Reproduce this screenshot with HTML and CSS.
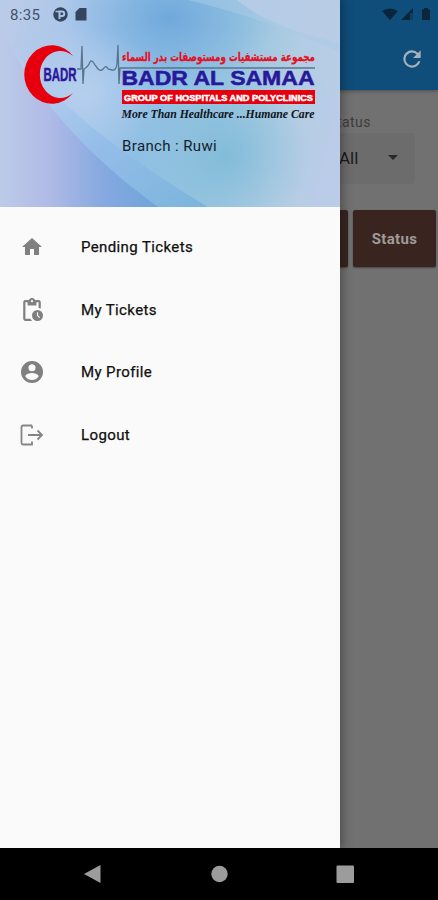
FILE: index.html
```html
<!DOCTYPE html>
<html lang="en">
<head>
<meta charset="utf-8">
<title>Badr Al Samaa</title>
<link rel="stylesheet" href="styles.css">
</head>
<body>
<div class="phone">
  <div class="screen">
    <header class="appbar">
      <div class="sysicons">
        <svg width="52" height="16" viewBox="0 0 52 16"><path d="M1 4Q9-1 17 4L9 13Z"/><path d="M20 13L32 1V6H29V13Z"/><path d="M29 6H32V13H29Z" opacity=".35"/><path d="M41 2.500h2V1h4v1.500h2V13h-8Z"/></svg>
      </div>
      <svg class="refresh" width="26" height="26" viewBox="0 0 24 24"><path d="M17.65 6.35A7.96 7.96 0 0 0 12 4a8 8 0 1 0 7.73 10h-2.08A6 6 0 1 1 12 6c1.66 0 3.14.69 4.22 1.78L13 11h7V4z"/></svg>
    </header>
    <main class="content">
      <div class="field">
        <div class="label">Status</div>
        <div class="select"><span>All</span><i class="caret"></i></div>
      </div>
      <div class="thead"><div class="cell"></div><div class="cell last">Status</div></div>
    </main>
    <aside class="drawer">
      <div class="banner">
        <svg class="art" width="340" height="207" viewBox="0 0 340 207">
          <defs>
            <linearGradient id="base" x1="0" y1=".35" x2="1" y2=".5">
              <stop offset="0" stop-color="#b9cbe8"/><stop offset=".2" stop-color="#a7c5ea"/><stop offset=".45" stop-color="#8fbfe4"/><stop offset=".66" stop-color="#98c5e0"/><stop offset=".85" stop-color="#b2cde3"/><stop offset="1" stop-color="#bacce7"/>
            </linearGradient>
            <linearGradient id="low" x1="0" y1="0" x2="1" y2="0">
              <stop offset="0" stop-color="#bccbe8"/><stop offset=".3" stop-color="#b1bbe6"/><stop offset=".65" stop-color="#86a9e0"/><stop offset="1" stop-color="#6da5da"/>
            </linearGradient>
            <linearGradient id="band" gradientUnits="userSpaceOnUse" x1="20" y1="30" x2="200" y2="207">
              <stop offset="0" stop-color="#c0d5ef" stop-opacity=".2"/><stop offset=".55" stop-color="#94bde9"/><stop offset="1" stop-color="#7bb5dc"/>
            </linearGradient>
            <radialGradient id="blue"><stop offset="0" stop-color="#6fa9db"/><stop offset="1" stop-color="#7db1e0" stop-opacity="0"/></radialGradient>
            <radialGradient id="teal"><stop offset="0" stop-color="#82bcd9"/><stop offset="1" stop-color="#8abfdc" stop-opacity="0"/></radialGradient>
            <radialGradient id="pale"><stop offset="0" stop-color="#bdd4f0" stop-opacity=".7"/><stop offset="1" stop-color="#bdd2ef" stop-opacity="0"/></radialGradient>
          </defs>
          <rect width="340" height="207" fill="url(#base)"/>
          <ellipse cx="170" cy="18" rx="105" ry="75" fill="url(#blue)"/>
          <ellipse cx="225" cy="155" rx="85" ry="85" fill="url(#teal)"/>
          <ellipse cx="85" cy="95" rx="75" ry="70" fill="url(#pale)"/>
          <path d="M0 35Q70 125 208 207H0Z" fill="url(#band)"/>
          <path d="M0 25Q45 125 158 207H0Z" fill="url(#low)"/>
          <path d="M188 0Q270 20 340 52V0Z" fill="#a9cbe5" opacity=".5"/>
          <path d="M237 0Q270 28 340 43V0Z" fill="#bacce6" opacity=".8"/>
        </svg>
        <div class="clockrow">
          <span>8:35</span>
          <svg width="34" height="15" viewBox="0 0 34 15"><circle cx="7.5" cy="7.5" r="7.2" fill="#34465e"/><path d="M6.500 12V4.500H9A2.200 2.200 0 0 1 9 9H6.500" fill="none" stroke="#a9c5e6" stroke-width="2"/><path d="M2.500 4.500H6" fill="none" stroke="#a9c5e6" stroke-width="1.500"/><path d="M30 1H37V13.500H26V5Z" transform="translate(-3.500)" fill="#34465e"/></svg>
        </div>
        <svg class="logo" width="300" height="84" viewBox="20 40 300 84">
          <path d="M73 56A27.500 29.200 0 1 0 73 93A20.500 23.500 0 1 1 73 56Z" fill="#e6000d"/>
          <text x="43.5" y="81" class="badr" textLength="33" lengthAdjust="spacingAndGlyphs">BADR</text>
          <path d="M77 69H81L82 46L83 84L84 69Q88 67 90 62Q92 59 95 65L98 69Q101 72 104 68Q106 65 108 69L112 70Q116 71 117 64L118 45L119 84L120 68H315" fill="none" stroke="#58758f" stroke-width="1.3"/>
          <text x="315" y="61" class="arabic" direction="rtl" textLength="193" lengthAdjust="spacingAndGlyphs">مجموعة مستشفيات ومستوصفات بدر السماء</text>
          <text x="121.5" y="85.3" class="name" textLength="193" lengthAdjust="spacingAndGlyphs">BADR AL SAMAA</text>
          <rect x="122" y="90" width="193" height="14" fill="#e6000d"/>
          <text x="124" y="100.5" class="group" textLength="189" lengthAdjust="spacingAndGlyphs">GROUP OF HOSPITALS AND POLYCLINICS</text>
          <text x="121.5" y="118" class="motto" textLength="193" lengthAdjust="spacingAndGlyphs">More Than Healthcare ...Humane Care</text>
        </svg>
        <div class="branch">Branch : Ruwi</div>
      </div>
      <nav class="menu">
        <a class="item"><svg viewBox="0 0 24 24"><path d="M10 20v-6h4v6h5v-8h3L12 3 2 12h3v8z"/></svg><span>Pending Tickets</span></a>
        <a class="item"><svg viewBox="0 0 24 24"><path d="M17 12a5 5 0 1 0 0 10 5 5 0 0 0 0-10zm1.65 7.35L16.5 17.2V14h1v2.79l1.85 1.85zM18 3h-3.18a3 3 0 0 0-5.64 0H6a2 2 0 0 0-2 2v15c0 1.1.9 2 2 2h6.11a6.7 6.7 0 0 1-1.42-2H6V5h2v3h8V5h2v5.080c.71.1 1.380.31 2 .6V5a2 2 0 0 0-2-2zm-6 2a1 1 0 1 1 0-2 1 1 0 0 1 0 2z" transform="translate(-1.200 -1.200) scale(1.100)"/></svg><span>My Tickets</span></a>
        <a class="item"><svg viewBox="0 0 24 24"><path d="M12 1a11 11 0 1 0 0 22 11 11 0 0 0 0-22zm0 3.300a3.500 3.500 0 1 1 0 7 3.500 3.500 0 0 1 0-7zm0 15.600a7.900 7.900 0 0 1-6.600-3.500c0-2.200 4.400-3.400 6.600-3.400s6.600 1.200 6.600 3.400a7.900 7.900 0 0 1-6.600 3.500z"/></svg><span>My Profile</span></a>
        <a class="item"><svg viewBox="0 0 24 24"><path d="M12 2.500H3Q1.500 2.500 1.500 4V20Q1.500 21.500 3 21.500H12V18.500M12 2.500V5.500M8 12H22M17.500 7.500L22 12L17.500 16.500" fill="none" stroke="#858585" stroke-width="1.8"/></svg><span>Logout</span></a>
      </nav>
    </aside>
  </div>
  <footer class="navbar">
    <svg width="438" height="52" viewBox="0 0 438 52"><g fill="#9c9c9c"><path d="M84 26L100.500 17V35Z"/><circle cx="219.500" cy="26" r="8.200"/><rect x="336.500" y="17.500" width="17.500" height="17.500" rx="1"/></g></svg>
  </footer>
</div>
</body>
</html>
```
FILE: styles.css
```css
* { box-sizing: border-box; }
body { margin: 0; font-family: Roboto, "Liberation Sans", sans-serif; }
.phone { width: 438px; height: 900px; display: flex; flex-direction: column; background: #000; overflow: hidden; }
.screen { position: relative; height: 848px; background: #717171; overflow: hidden; }
.appbar { height: 90px; background: #0f4d7b; display: flex; flex-direction: column; align-items: flex-end; box-shadow: 0 1px 4px rgba(0,0,0,.35); }
.sysicons { height: 30px; padding: 7px 6px 0 0; fill: #0b263c; margin-right: -1px; }
.sysicons svg { display: block; }
.refresh { margin: 16px 13px 0 0; fill: #a9b2b9; }
.content { height: 758px; }
.field { margin-left: 328px; padding-top: 24px; width: 87px; }
.label { font-size: 14px; line-height: 17px; color: #3c3c3c; letter-spacing: .5px; }
.select { margin-top: 2px; height: 51px; display: flex; align-items: center; justify-content: space-between; padding: 0 17px 2px 11px; border-radius: 4px; background: #6c6c6c; font-size: 17px; color: #1b1b1b; }
.caret { border: 5.5px solid transparent; border-top-color: #292929; border-bottom: 0; }
.thead { margin: 26px 2px 0 266px; display: flex; gap: 5px; }
.cell { width: 82px; height: 57px; border-radius: 2px; background: #39241f; box-shadow: 0 1px 2px rgba(0,0,0,.4); }
.last { width: 83px; display: flex; align-items: center; justify-content: center; color: #a09b99; font-size: 15px; font-weight: 700; letter-spacing: .3px; }
.drawer { position: absolute; left: 0; top: 0; width: 340px; height: 848px; background: #fafafa; box-shadow: 0 0 10px 2px rgba(0,0,0,.35); }
.banner { position: relative; height: 207px; border-bottom: 1px solid #c8d8ea; }
.art { position: absolute; left: 0; top: 0; }
.clockrow { position: relative; height: 40px; padding: 7px 0 0 10px; display: flex; gap: 12px; font-size: 15px; line-height: 16px; color: #3d526b; }
.clockrow span { width: 31px; letter-spacing: .3px; }
.logo { position: relative; display: block; margin-left: 20px; overflow: visible; }
.badr { font: 700 19px "Liberation Sans", sans-serif; fill: #2b189a; stroke: #2b189a; stroke-width: .5px; }
.arabic { font: 700 12px "DejaVu Sans", sans-serif; fill: #e51022; stroke: #e51022; stroke-width: .3px; }
.name { font: 700 20px "Liberation Sans", sans-serif; fill: #28189b; stroke: #28189b; stroke-width: .5px; }
.group { font: 700 9.3px "Liberation Sans", sans-serif; fill: #fff; stroke: #fff; stroke-width: .5px; }
.motto { font: italic 700 12px "Liberation Serif", serif; fill: #10151d; }
.branch { position: relative; margin: 13px 0 0 122px; font-size: 15px; line-height: 18px; letter-spacing: .38px; color: #131e2c; }
.menu { display: flex; flex-direction: column; padding-top: 9px; }
.item { height: 62.5px; display: flex; align-items: center; gap: 37px; padding-left: 20px; color: #101010; font-size: 15px; letter-spacing: .38px; -webkit-text-stroke: .25px #101010; }
.item svg { width: 24px; height: 24px; fill: #808080; }
.navbar { height: 52px; background: #000; }
.navbar svg { display: block; }
```
